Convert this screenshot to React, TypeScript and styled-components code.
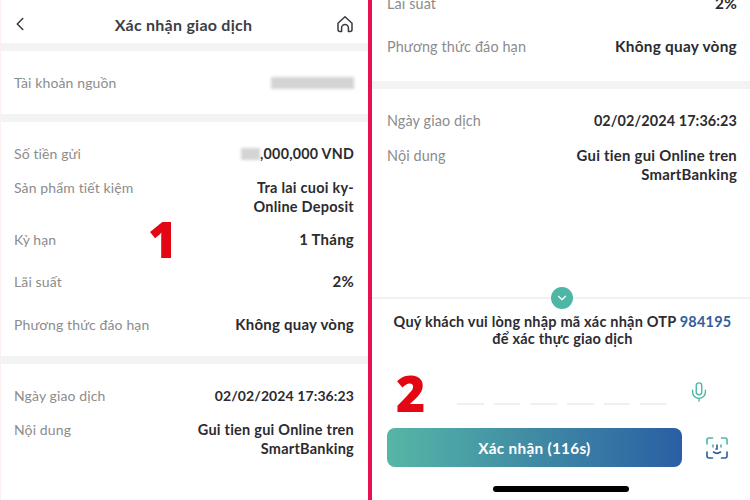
import styled, { createGlobalStyle } from "styled-components";
import { ChevronDown, ChevronLeft, Mic } from "lucide-react";

const GlobalStyle = createGlobalStyle`
  html, body { margin: 0; padding: 0; background: #fff; }
  * { box-sizing: border-box; }
`;

const Page = styled.div`
  width: 750px;
  height: 500px;
  display: grid;
  grid-template-columns: 368px 4px 378px;
  overflow: hidden;
  position: relative;
  background: #fff;
  font-family: "Lato", "Noto Sans", sans-serif;
  font-size: 14px;
  line-height: 19px;
`;

const Pane = styled.div`
  height: 500px;
  display: flex;
  flex-direction: column;
  overflow: hidden;
  position: relative;
`;

const LeftPane = styled(Pane)`
  box-shadow: inset 1px 0 0 #fdeef2;
`;

const Divider = styled.div`
  background: #e8114f;
`;

const Header = styled.header`
  height: 43px;
  padding: 5px 14px 0 9px;
  display: flex;
  align-items: center;
  justify-content: space-between;
  color: #3a3a42;
`;

const Title = styled.h1`
  margin: 0;
  font-size: 16px;
  font-weight: 700;
  letter-spacing: 0.25px;
  color: #3d3d45;
`;

const Band = styled.div`
  height: 8px;
  flex: none;
  background: #f3f3f3;
`;

const Section = styled.section<{ $side?: "left" | "right"; $bottom?: number }>`
  font-size: ${(p) => (p.$side === "right" ? "14.4px" : "14px")};
  padding: 22px ${(p) => (p.$side === "right" ? "13px" : "14px")} ${(p) => p.$bottom ?? 22}px
    ${(p) => (p.$side === "right" ? "15px" : "14px")};
  display: flex;
  flex-direction: column;
`;

const Row = styled.div<{ $gap?: number }>`
  display: flex;
  justify-content: space-between;
  align-items: flex-start;
  margin-top: ${(p) => p.$gap ?? 0}px;
`;

const Label = styled.span`
  color: #8c8c8c;
  letter-spacing: 0.12px;
`;

const Value = styled.span<{ $size?: number }>`
  color: #2b2b30;
  font-size: ${(p) => p.$size ?? 1.07}em;
  font-weight: 700;
  text-align: right;
  letter-spacing: ${(p) => (p.$size === 1 ? "0.1px" : "0.25px")};
`;

const Smudge = styled.span<{ $w: number }>`
  display: inline-block;
  align-self: center;
  width: ${(p) => p.$w}px;
  height: 12px;
  vertical-align: -1px;
  background: #d4d4d4;
  filter: blur(1.5px);
`;

const Scrolled = styled.div`
  height: 297px;
  flex: none;
  overflow: hidden;
`;

const ScrolledInner = styled.div`
  margin-top: -6px;
  display: flex;
  flex-direction: column;
`;

const Sheet = styled.div`
  flex: 1;
  position: relative;
  border-top: 2px solid #f1f1f1;
  display: flex;
  flex-direction: column;
  align-items: center;
  padding-top: 14px;
`;

const Toggle = styled.div`
  position: absolute;
  top: -12px;
  left: 179px;
  width: 22px;
  height: 22px;
  border-radius: 50%;
  background: #4db6a4;
  color: #fff;
  display: flex;
  align-items: center;
  justify-content: center;
`;

const Prompt = styled.p`
  margin: 0 0 0 3px;
  font-weight: 700;
  font-size: 14.5px;
  line-height: 17px;
  text-align: center;
  color: #2c2c32;
  letter-spacing: 0.2px;
`;

const Otp = styled.span`
  color: #2f6099;
`;

const OtpRow = styled.div`
  width: 100%;
  margin-top: 19px;
  padding: 0 40px 0 85px;
  height: 40px;
  display: flex;
  align-items: flex-end;
  justify-content: space-between;
`;

const Dashes = styled.div`
  display: flex;
  gap: 10px;
  padding-bottom: 1px;
`;

const Dash = styled.i`
  display: block;
  width: 26.7px;
  height: 2px;
  background: #eef0f5;
`;

const MicWrap = styled.div`
  color: #4db6a4;
  height: 26px;
  margin-bottom: -1px;
`;

const Actions = styled.div`
  width: 100%;
  margin-top: 22px;
  padding: 0 22px 0 15px;
  display: flex;
  align-items: center;
  justify-content: space-between;
`;

const Confirm = styled.button`
  width: 295px;
  height: 39px;
  border: 0;
  border-radius: 8px;
  background: linear-gradient(90deg, #56b6a6 0%, #2a5fa3 100%);
  color: #fff;
  font: 700 15.3px "Lato", "Noto Sans", sans-serif;
  letter-spacing: 0.3px;
`;

const HomeBar = styled.div`
  width: 136px;
  height: 6px;
  border-radius: 3px;
  background: #000;
  margin-top: 19px;
`;

const Numeral = styled.span<{ $x: number; $y: number }>`
  position: absolute;
  left: ${(p) => p.$x}px;
  top: ${(p) => p.$y}px;
  font: 800 50px/50px "Open Sans", sans-serif;
  color: #e30613;
`;

function HomeIcon() {
  return (
    <svg width="18" height="18" viewBox="0 0 18 18" fill="none" stroke="#3a3a42" strokeWidth="1.5">
      <path d="M2 8.2 9 1.8l7 6.4v6.3a2 2 0 0 1-2 2h-1.6v-3.6a3.4 3.4 0 0 0-6.8 0v3.6H4a2 2 0 0 1-2-2z" strokeLinejoin="round" />
    </svg>
  );
}

function FaceIcon() {
  return (
    <svg width="22" height="22" viewBox="0 0 22 22" fill="none" strokeWidth="1.6" strokeLinecap="round">
      <g stroke="#4db6a4">
        <path d="M1 7V3a2 2 0 0 1 2-2h3.5" />
        <path d="M15.500 1H19a2 2 0 0 1 2 2v4" />
        <path d="M7 8v2M15 8v2" />
      </g>
      <g stroke="#2a5fa3">
        <path d="M1 15v4a2 2 0 0 0 2 2h3.500" />
        <path d="M21 15v4a2 2 0 0 1-2 2h-3.500" />
        <path d="M11 8v4h-1M7.500 15c2 1.500 5 1.500 7 0" />
      </g>
    </svg>
  );
}

export default function App() {
  const dashes = [0, 1, 2, 3, 4, 5];
  return (
    <Page>
      <GlobalStyle />
      <LeftPane>
        <Header>
          <ChevronLeft size={22} strokeWidth={1.7} />
          <Title>Xác nhận giao dịch</Title>
          <HomeIcon />
        </Header>
        <Band />
        <Section>
          <Row>
            <Label>Tài khoản nguồn</Label>
            <Smudge $w={83} />
          </Row>
        </Section>
        <Band />
        <Section>
          <Row>
            <Label>Số tiền gửi</Label>
            <Value $size={1.02}>
              <Smudge $w={19} />,000,000 VND
            </Value>
          </Row>
          <Row $gap={15}>
            <Label>Sản phẩm tiết kiệm</Label>
            <Value $size={1.035}>
              Tra lai cuoi ky-
              <br />
              Online Deposit
            </Value>
          </Row>
          <Row $gap={14}>
            <Label>Kỳ hạn</Label>
            <Value>1 Tháng</Value>
          </Row>
          <Row $gap={23}>
            <Label>Lãi suất</Label>
            <Value>2%</Value>
          </Row>
          <Row $gap={24}>
            <Label>Phương thức đáo hạn</Label>
            <Value>Không quay vòng</Value>
          </Row>
        </Section>
        <Band />
        <Section>
          <Row>
            <Label>Ngày giao dịch</Label>
            <Value $size={1}>02/02/2024 17:36:23</Value>
          </Row>
          <Row $gap={15}>
            <Label>Nội dung</Label>
            <Value $size={1.035}>
              Gui tien gui Online tren
              <br />
              SmartBanking
            </Value>
          </Row>
        </Section>
        <Numeral $x={148} $y={214}>1</Numeral>
      </LeftPane>
      <Divider />
      <Pane>
        <Scrolled>
          <ScrolledInner>
            <Section $side="right" $bottom={25}>
              <Row $gap={-22}>
                <Label>Lãi suất</Label>
                <Value>2%</Value>
              </Row>
              <Row $gap={24}>
                <Label>Phương thức đáo hạn</Label>
                <Value>Không quay vòng</Value>
              </Row>
            </Section>
            <Band />
            <Section $side="right">
              <Row>
                <Label>Ngày giao dịch</Label>
                <Value $size={1}>02/02/2024 17:36:23</Value>
              </Row>
              <Row $gap={16}>
                <Label>Nội dung</Label>
                <Value $size={1.035}>
                  Gui tien gui Online tren
                  <br />
                  SmartBanking
                </Value>
              </Row>
            </Section>
          </ScrolledInner>
        </Scrolled>
        <Sheet>
          <Toggle>
            <ChevronDown size={14} strokeWidth={2} />
          </Toggle>
          <Prompt>
            Quý khách vui lòng nhập mã xác nhận OTP <Otp>984195</Otp>
            <br />
            để xác thực giao dịch
          </Prompt>
          <OtpRow>
            <Dashes>
              {dashes.map((d) => (
                <Dash key={d} />
              ))}
            </Dashes>
            <MicWrap>
              <Mic size={22} strokeWidth={1.5} />
            </MicWrap>
          </OtpRow>
          <Actions>
            <Confirm>Xác nhận (116s)</Confirm>
            <FaceIcon />
          </Actions>
          <HomeBar />
        </Sheet>
        <Numeral $x={24} $y={368}>2</Numeral>
      </Pane>
    </Page>
  );
}
